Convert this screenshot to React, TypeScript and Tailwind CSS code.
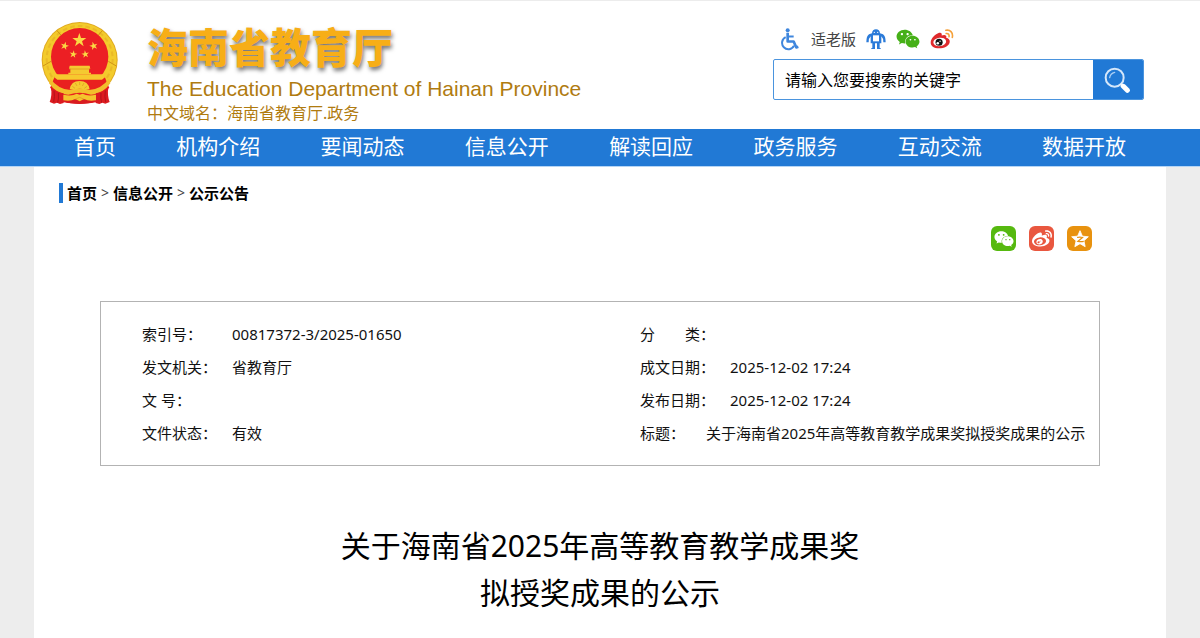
import React from "react";
import { FaWeixin, FaWeibo } from "react-icons/fa";

const NAV_LINKS = [
  "首页",
  "机构介绍",
  "要闻动态",
  "信息公开",
  "解读回应",
  "政务服务",
  "互动交流",
  "数据开放",
];

const CRUMBS = ["首页", "信息公开", "公示公告"];

const INFO_LEFT = [
  { label: "索引号：", value: "00817372-3/2025-01650" },
  { label: "发文机关：", value: "省教育厅" },
  { label: "文 号：", value: "" },
  { label: "文件状态：", value: "有效" },
];

const INFO_RIGHT = [
  { label: "分\u3000\u3000类：", value: "" },
  { label: "成文日期：", value: "2025-12-02 17:24" },
  { label: "发布日期：", value: "2025-12-02 17:24" },
  { label: "标题：", value: "关于海南省2025年高等教育教学成果奖拟授奖成果的公示", short: true },
];

const STAR =
  "M0-10 2.3-3.1 9.5-3.1 3.7 1.2 5.9 8.1 0 3.8-5.9 8.1-3.7 1.2-9.5-3.1-2.3-3.1Z";

function Emblem() {
  return (
    <svg viewBox="36 33 234 252" className="h-[84px] w-[78px]" role="img" aria-label="国徽">
      <circle cx="152" cy="150" r="114" fill="#dfa81f" />
      <circle cx="152" cy="150" r="111" fill="#f3cb2c" />
      <circle cx="152" cy="147" r="99" fill="none" stroke="#eab927" strokeWidth="6" strokeDasharray="14 9" />
      <path d="M42 168l24-14M262 168l-24-14M84 62l14 16M220 62l-14 16" stroke="#cf9418" strokeWidth="3" />
      <circle cx="152" cy="140" r="86" fill="#ec1f24" />
      <g fill="#fbd843">
        <path d={STAR} transform="translate(151 91) scale(2.2)" />
        <path d={STAR} transform="translate(107 108) rotate(15) scale(1.3)" />
        <path d={STAR} transform="translate(194 108) rotate(-15) scale(1.3)" />
        <path d={STAR} transform="translate(133 133) rotate(8) scale(1.2)" />
        <path d={STAR} transform="translate(169 133) rotate(-8) scale(1.2)" />
      </g>
      {/* gate */}
      <path d="M122 167h60l2 9h-4v12h6v5h-68v-5h6v-12h-4Z" fill="#f5c931" />
      <path d="M120 177h63" stroke="#d9921c" strokeWidth="2" />
      {/* red field under the gate */}
      <path d="M78 198h148l14 34-16 40q-72 18-144 0l-16-40Z" fill="#e9201f" />
      <path d="M80 193h144l5 8-10 8H85l-10-8Z" fill="#f7c92e" />
      {/* inner band */}
      <path d="M64 206q24 32 60 34 14-4 28-4 14 0 28 4 36-2 60-34l4 14q-22 32-58 34-18-6-34-6-16 0-34 6-36-2-58-34Z" fill="#f2bf2c" />
      {/* gear */}
      <path d="M122 238q4-25 30-25t30 25l-14 2q-16-8-32 0Z" fill="#f5c931" />
      <path d="M130 229l8 6M139 219l5 9M152 215v10M165 219l-5 9M174 229l-8 6" stroke="#d9981f" strokeWidth="2" />
      {/* ribbons */}
      <path d="M66 231q14 16 38 19v29l-11 3-9-4-9 3-13-5q8-20 4-45ZM238 231q-14 16-38 19v29l11 3 9-4 9 3 13-5q-8-20-4-45Z" fill="#dc1b20" />
      <path d="M75 242q3 18-1 34M88 249q2 16-2 29M229 242q-3 18 1 34M216 249q-2 16 2 29" stroke="#b3121a" strokeWidth="3" fill="none" />
      <path d="M104 256q48 8 96 0v18q-18 8-48 8t-48-8Z" fill="#d91b1f" />
      {/* bow */}
      <path d="M103 254q26 6 40-3l9 3 9-3q14 9 40 3v17q-22 4-36-4l-13 7-13-7q-14 8-36 4Z" fill="#f5c52d" />
      <path d="M138 268l14-6 14 6" stroke="#d9981f" strokeWidth="2" fill="none" />
    </svg>
  );
}

function WheelchairIcon() {
  return (
    <svg viewBox="0 0 54 68" className="h-[23px] w-[18px]" fill="none" stroke="#3f86dd">
      <circle cx="20" cy="6" r="6" fill="#3f86dd" stroke="none" />
      <path d="M20 14v26h18l8 18 6-2" strokeWidth="8" strokeLinejoin="round" />
      <path d="M21 25h17" strokeWidth="6" />
      <path d="M14 27a19 19 0 1 0 25 26" strokeWidth="6" />
    </svg>
  );
}

function RobotIcon() {
  return (
    <svg viewBox="0 0 60 60" className="h-5 w-5" fill="#2b7bd9">
      <path d="M18 13Q19 1 30 1t12 12l9 3q8 5 8 24h-7q0-13-6-18v21h-5v14h3v3H33V43h-6v17H16v-3h3V43h-5V22q-6 5-6 18H1q0-19 8-24Z" />
      <path d="M21 19h18v18H21Z" fill="#fff" />
      <circle cx="25" cy="10" r="2" fill="#fff" />
      <circle cx="35" cy="10" r="2" fill="#fff" />
    </svg>
  );
}

function WeiboColorIcon() {
  return (
    <svg viewBox="0 0 72 62" className="h-5 w-6">
      <path
        d="M27 12c5-2 10 0 8 8 8-3 17-2 14 7 7 2 12 6 11 13-2 12-17 20-33 20C11 60 0 52 1 40 2 30 15 16 27 12Z"
        fill="#df2a2c"
      />
      <ellipse cx="29" cy="40" rx="20" ry="13" fill="#fff" transform="rotate(-8 29 40)" />
      <circle cx="27" cy="41" r="11" fill="#111" />
      <circle cx="23" cy="44" r="4" fill="#fff" />
      <circle cx="30" cy="38" r="2" fill="#fff" />
      <g fill="none" stroke="#f5a13a" strokeWidth="5" strokeLinecap="round">
        <path d="M48 4c13-3 23 7 20 22" />
        <path d="M49 14c6-1 10 3 9 10" />
      </g>
    </svg>
  );
}

function SearchIcon() {
  return (
    <svg viewBox="0 0 78 78" className="mr-0.5 h-[26px] w-[26px]" fill="none">
      <circle cx="32" cy="32" r="27" stroke="#d5e7fa" strokeWidth="6" />
      <path d="M17 32q2-13 15-16" stroke="#a9cdf3" strokeWidth="4" strokeLinecap="round" />
      <path d="m50 50 6 6" stroke="#e6f1fc" strokeWidth="7" />
      <path d="m58 58 12 12" stroke="#fff" strokeWidth="15" strokeLinecap="round" />
    </svg>
  );
}

function QzoneIcon() {
  return (
    <svg viewBox="0 0 24 24" className="h-5 w-5">
      <path
        d="m12 2 2.900 6.600 7.100.7-5.300 4.800 1.500 7.100L12 17.600l-6.200 3.600 1.500-7.100L2 9.300l7.100-.7Z"
        fill="#fff"
        stroke="#fff"
        strokeLinejoin="round"
      />
      <path d="M8.500 10.200q3.500-.7 6.500 0l-5.500 4.600q3.500.6 7 0" fill="none" stroke="#e8920f" strokeWidth="1.500" />
    </svg>
  );
}

type InfoItem = { label: string; value: string; short?: boolean };

function InfoList({ items }: { items: InfoItem[] }) {
  return (
    <dl>
      {items.map((item) => (
        <div key={item.label} className="flex h-[33px] items-center whitespace-nowrap">
          <dt className={item.short ? "w-[66px] shrink-0" : "w-[90px] shrink-0"}>{item.label}</dt>
          <dd>{item.value}</dd>
        </div>
      ))}
    </dl>
  );
}

export default function App() {
  return (
    <div className="min-h-screen bg-[#ededed] font-['Noto_Sans','Noto_Sans_CJK_SC',sans-serif] text-black">
      {/* Header */}
      <header className="flex h-[129px] items-start justify-between border-t border-[#ececec] bg-white pr-14 pl-[41px]">
        <div className="flex">
          <div className="pt-5">
            <Emblem />
          </div>
          <div className="ml-7 pt-[18px] whitespace-nowrap">
            <h1 className="mb-1.5 font-['Noto_Sans_CJK_SC',sans-serif] text-[41px] leading-[52px] font-black text-[#f7ae17] [text-shadow:1px_3px_4px_rgba(0,0,0,0.55)]">
              海南省教育厅
            </h1>
            <p className="font-['Liberation_Sans',Arial,sans-serif] text-[21px] leading-6 text-[#b07b10]">
              The Education Department of Hainan Province
            </p>
            <p className="text-base leading-6 text-[#b07b10]">中文域名：海南省教育厅.政务</p>
          </div>
        </div>

        <div className="w-[371px] pt-6">
          <div className="flex h-7 items-center pl-2">
            <a href="#" className="flex items-center gap-3 text-[15px] text-[#444]">
              <WheelchairIcon />
              适老版
            </a>
            <a href="#" aria-label="智能问答" className="ml-2.5">
              <RobotIcon />
            </a>
            <a href="#" aria-label="微信" className="ml-2.5">
              <FaWeixin className="h-6 w-6 text-[#46b018]" />
            </a>
            <a href="#" aria-label="微博" className="ml-2.5">
              <WeiboColorIcon />
            </a>
          </div>
          <form
            className="mt-1.5 flex h-[41px] overflow-hidden rounded-xs border border-[#4a94de] bg-white"
            onSubmit={(e) => e.preventDefault()}
          >
            <input
              type="text"
              aria-label="搜索"
              placeholder="请输入您要搜索的关键字"
              className="min-w-0 flex-1 px-[11px] text-base outline-none placeholder:text-black"
            />
            <button
              type="submit"
              aria-label="搜索"
              className="flex w-[50px] items-center justify-center bg-[#2179d5]"
            >
              <SearchIcon />
            </button>
          </form>
        </div>
      </header>

      {/* Main nav */}
      <nav className="border-b border-[#b5d5f5] bg-[#2179d5]">
        <ul className="flex h-[37px] items-start justify-between px-[74px]">
          {NAV_LINKS.map((l) => (
            <li key={l}>
              <a href="#" className="block text-[21px] leading-[35px] whitespace-nowrap text-white">
                {l}
              </a>
            </li>
          ))}
        </ul>
      </nav>

      <main className="mx-[34px] min-h-[471px] bg-white px-[25px] pt-4">
        {/* Breadcrumb */}
        <div className="flex h-5 items-center gap-1 border-l-4 border-[#2179d5] pl-1 text-[15px]">
          {CRUMBS.map((c, i) => (
            <React.Fragment key={c}>
              {i > 0 && <span className="text-sm text-[#444]">&gt;</span>}
              <a href="#" className="font-bold">
                {c}
              </a>
            </React.Fragment>
          ))}
        </div>

        {/* Share */}
        <div className="mt-[23px] mr-[49px] flex justify-end gap-[13px]">
          <button
            aria-label="分享到微信"
            className="flex size-[25px] items-center justify-center rounded-md bg-[#56b90f] text-white"
          >
            <FaWeixin className="h-5 w-5" />
          </button>
          <button
            aria-label="分享到微博"
            className="flex size-[25px] items-center justify-center rounded-md bg-[#e9573f] text-white"
          >
            <FaWeibo className="h-5 w-5" />
          </button>
          <button
            aria-label="分享到QQ空间"
            className="flex size-[25px] items-center justify-center rounded-md bg-[#e8920f]"
          >
            <QzoneIcon />
          </button>
        </div>

        {/* Document info */}
        <section className="mx-[41px] mt-[50px] grid grid-cols-2 border border-[#b3b3b3] px-[41px] pt-4 pb-[15px] text-[15px] text-[#111]">
          <InfoList items={INFO_LEFT} />
          <div className="pl-10">
            <InfoList items={INFO_RIGHT} />
          </div>
        </section>

        <h2 className="mt-14 text-center text-3xl leading-[47px]">
          关于海南省2025年高等教育教学成果奖
          <br />
          拟授奖成果的公示
        </h2>
      </main>
    </div>
  );
}
